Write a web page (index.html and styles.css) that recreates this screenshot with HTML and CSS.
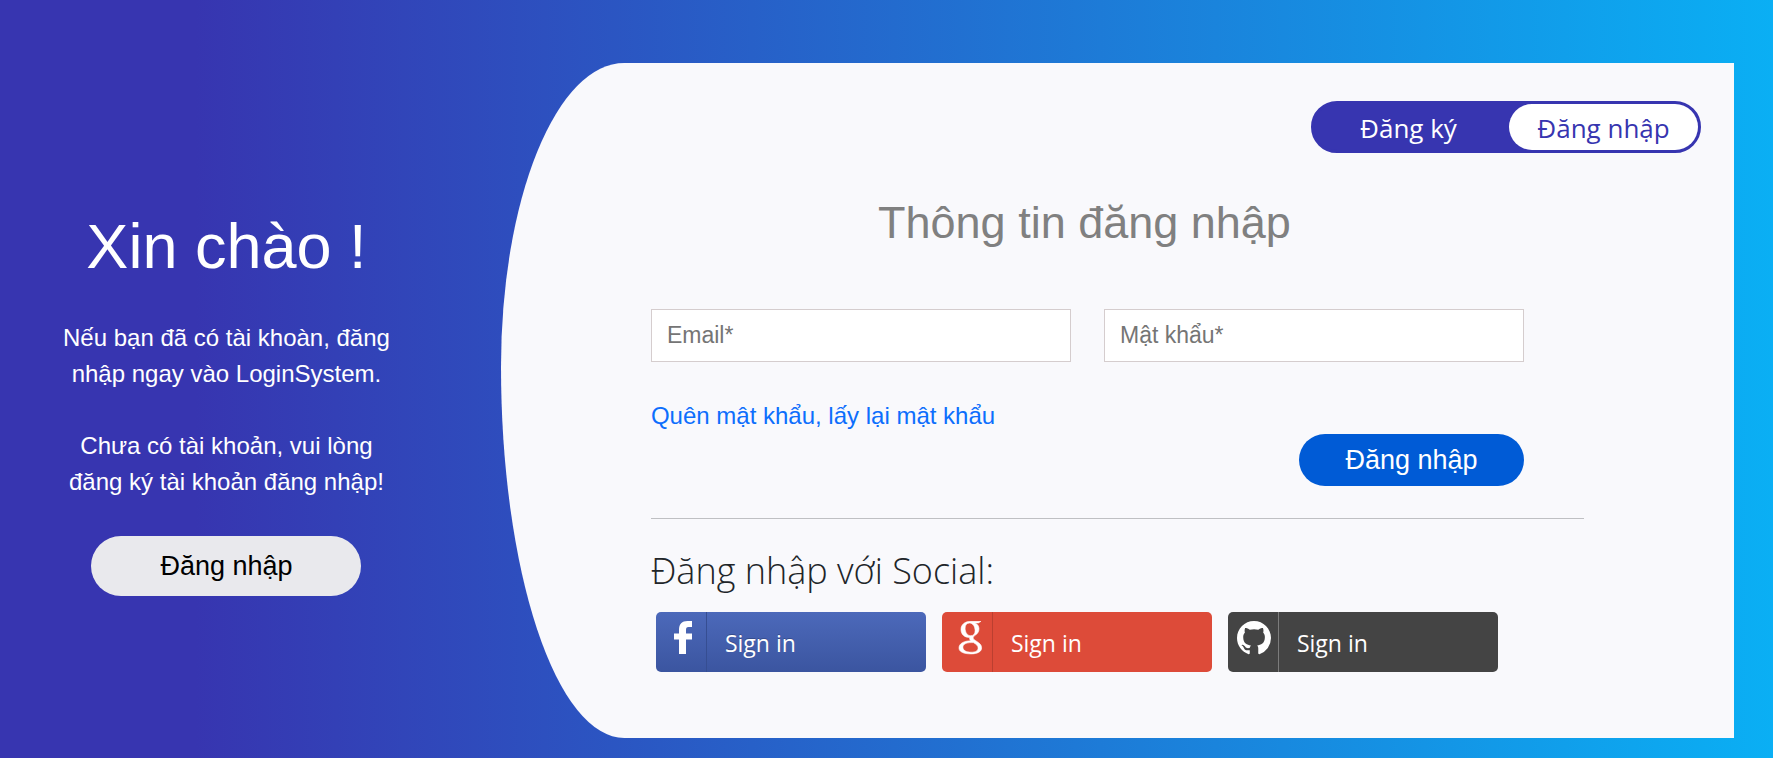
FILE: index.html
```html
<!DOCTYPE html>
<html lang="vi">

<head>
    <meta charset="UTF-8">
    <meta name="viewport" content="width=device-width, initial-scale=1.0">
    <title>Đăng nhập</title>
    <link rel="stylesheet" href="styles.css">
</head>

<body>
    <main class="register">
        <section class="register-left">
            <h1>Xin chào !</h1>
            <p>Nếu bạn đã có tài khoàn, đăng nhập ngay vào LoginSystem.</p>
            <p>Chưa có tài khoản, vui lòng đăng ký tài khoản đăng nhập!</p>
            <button type="button" class="btn-left">Đăng nhập</button>
        </section>

        <section class="register-right">
            <nav class="tabs">
                <a href="#register" class="tab">Đăng ký</a>
                <a href="#login" class="tab active">Đăng nhập</a>
            </nav>

            <div class="content">
                <h2>Thông tin đăng nhập</h2>
                <form class="login-form" id="login">
                    <div class="fields">
                        <input type="email" name="email" placeholder="Email*" aria-label="Email">
                        <input type="password" name="password" placeholder="Mật khẩu*" aria-label="Mật khẩu">
                    </div>
                    <a href="#forgot" class="forgot">Quên mật khẩu, lấy lại mật khẩu</a>
                    <button type="submit" class="btn-login">Đăng nhập</button>
                </form>
                <hr>
                <h3>Đăng nhập với Social:</h3>
                <div class="social">
                    <a href="#facebook" class="btn-social facebook">
                        <span class="icon">
                            <svg viewBox="0 0 34 34" aria-hidden="true">
                                <path d="M14 33V18.500H9v-6h5V9c0-6 3-9 8.500-9H27v6h-3.500C21.500 6 21 7 21 9v3.500h6v6h-6V33z" />
                            </svg>
                        </span>
                        <span class="label">Sign in</span>
                    </a>
                    <a href="#google" class="btn-social google">
                        <span class="icon">
                            <svg viewBox="0 0 34 34" aria-hidden="true">
                                <path fill-rule="evenodd" stroke="#fff" stroke-width=".6" d="M20 .3H30l-2.500 1.600H24.200C26.800 3.400 28 5.300 28 7.800c0 3-1.500 4.900-3.600 6.300-1.800 1.300-2.200 1.900-2.200 2.800 0 1 1 1.800 2.500 2.800 3.900 2.500 5.900 4.100 5.900 7.200 0 3.500-3.700 6-10.600 6-7.500 0-12-2.100-12-5.900 0-4.600 5-7.100 11.800-7.300-1.100-1.200-1.500-2.100-1.100-3.300-5 .3-8.700-3-8.700-8C10 3.500 14 .3 20 .3zM18.500 2c-2.900 0-4.400 2.200-4.400 5.200 0 4 2.200 7.500 5.600 7.500 2.900 0 4.400-2 4.400-5 0-4-2.200-7.700-5.600-7.700zM20.500 21.600c-5.600 0-8.600 1.700-8.600 4.700s3.200 4.900 8.100 4.900c4.800 0 7.100-1.600 7.100-4.300 0-2.400-1.900-3.500-4.700-5.300z" />
                            </svg>
                        </span>
                        <span class="label">Sign in</span>
                    </a>
                    <a href="#github" class="btn-social github">
                        <span class="icon">
                            <svg viewBox="0 0 16 16" aria-hidden="true">
                                <path d="M8 0C3.580 0 0 3.580 0 8c0 3.540 2.290 6.530 5.470 7.590.4.070.55-.17.55-.38 0-.19-.01-.82-.01-1.490-2.010.37-2.530-.49-2.690-.94-.09-.23-.48-.94-.82-1.130-.28-.15-.68-.52-.01-.53.63-.01 1.080.58 1.230.82.72 1.210 1.870.87 2.330.66.07-.52.28-.87.51-1.070-1.780-.2-3.640-.89-3.640-3.950 0-.87.31-1.590.82-2.150-.08-.2-.36-1.020.08-2.120 0 0 .67-.21 2.200.82.64-.18 1.320-.27 2-.27s1.360.09 2 .27c1.530-1.040 2.200-.82 2.200-.82.44 1.100.16 1.920.08 2.120.51.56.82 1.270.82 2.150 0 3.070-1.870 3.750-3.650 3.950.29.25.54.73.54 1.480 0 1.070-.01 1.930-.01 2.200 0 .21.15.46.55.38A8.010 8.010 0 0 0 16 8c0-4.420-3.580-8-8-8z" />
                            </svg>
                        </span>
                        <span class="label">Sign in</span>
                    </a>
                </div>
            </div>
        </section>
    </main>
</body>

</html>
```
FILE: styles.css
```css
/**** DEFAULTS ****/

* {
    padding: 0;
    margin: 0;
    box-sizing: border-box;
}

body {
    font-family: "Liberation Sans", Arial, sans-serif;
    font-size: 24px;
    line-height: 36px;
    color: #212529;
}

a {
    text-decoration: none;
}

button,
input {
    font-family: inherit;
    border: 0;
}

button {
    cursor: pointer;
}

h1,
h2,
h3 {
    font-weight: 400;
}

/**** LAYOUT ****/

.register {
    display: grid;
    grid-template-columns: 13fr 32fr;
    min-height: 100vh;
    padding: 63px 39px 20px 0;
    background: linear-gradient(to right, #3735b0 11%, #0aaff4);
}

/**** LEFT ****/

.register-left {
    display: flex;
    flex-direction: column;
    align-items: center;
    padding: 145px 48px 0 0;
    text-align: center;
    color: #fff;
}

.register-left h1 {
    margin-bottom: 36px;
    font-size: 63px;
    line-height: 76px;
}

.register-left p {
    max-width: 350px;
    margin-bottom: 36px;
}

.btn-left {
    width: 270px;
    height: 60px;
    border-radius: 30px;
    background: #e9e9ed;
    font-size: 27px;
    color: #000;
}

/**** RIGHT ****/

.register-right {
    padding-top: 38px;
    background: #f9f9fc;
    border-radius: 10% 0 0 10% / 45% 0 0 55%;
}

.tabs {
    display: flex;
    width: 390px;
    height: 52px;
    margin: 0 33px 0 auto;
    border: 3px solid #3735b0;
    border-radius: 26px;
    background: #3735b0;
    font-family: "Open Sans", "Noto Sans", sans-serif;
    font-size: 26px;
    line-height: 48px;
    text-align: center;
}

.tab {
    flex: 1;
    padding-right: 6px;
    color: #fff;
}

.tab.active {
    flex: 0 0 189px;
    padding-right: 0;
    border-radius: 23px;
    background: #fff;
    color: #3735b0;
}

.content {
    padding: 0 150px;
}

.content h2 {
    margin: 43px 0 59px;
    padding-right: 66px;
    font-size: 45px;
    line-height: 54px;
    text-align: center;
    color: #808080;
}

.login-form {
    display: flex;
    flex-direction: column;
    padding-right: 60px;
}

.fields {
    display: flex;
    gap: 33px;
    margin-bottom: 36px;
}

.fields input {
    flex: 1;
    min-width: 0;
    height: 53px;
    padding: 0 15px;
    border: 1px solid #d5cdce;
    background: #fff;
    font-size: 23px;
}

.fields input::placeholder {
    color: #757575;
}

.forgot {
    align-self: flex-start;
    color: #0d6efd;
}

.btn-login {
    align-self: flex-end;
    width: 225px;
    height: 52px;
    border-radius: 26px;
    background: #005bd6;
    font-size: 27px;
    color: #fff;
}

hr {
    margin: 32px 0 23px;
    border: 0;
    border-top: 1px solid #bfc0c3;
}

.content h3 {
    margin-bottom: 13px;
    font-family: "Open Sans", "Noto Sans", sans-serif;
    font-size: 36px;
    font-weight: 300;
    line-height: 57px;
}

/**** SOCIAL ****/

.social {
    display: flex;
    gap: 16px;
    padding-left: 5px;
}

.btn-social {
    display: flex;
    width: 270px;
    height: 60px;
    border-radius: 5px;
    font-family: "Open Sans", "Noto Sans", sans-serif;
    font-size: 23px;
    color: #fff;
}

.icon {
    width: 51px;
    padding: 9px 0 0 9px;
    border-right: 1px solid #364e92;
}

.icon svg {
    display: block;
    width: 34px;
    height: 34px;
    fill: #fff;
}

.label {
    padding-left: 18px;
    line-height: 62px;
}

.facebook {
    background: linear-gradient(#4c69ba, #3b55a0);
    text-shadow: 0 -1px 0 #354c8c;
}

.google {
    background: #dd4b39;
}

.google .icon {
    border-color: #bb3f30;
}

.github {
    background: #444;
}

.github .icon {
    border-color: #7c7c7c;
}
```
